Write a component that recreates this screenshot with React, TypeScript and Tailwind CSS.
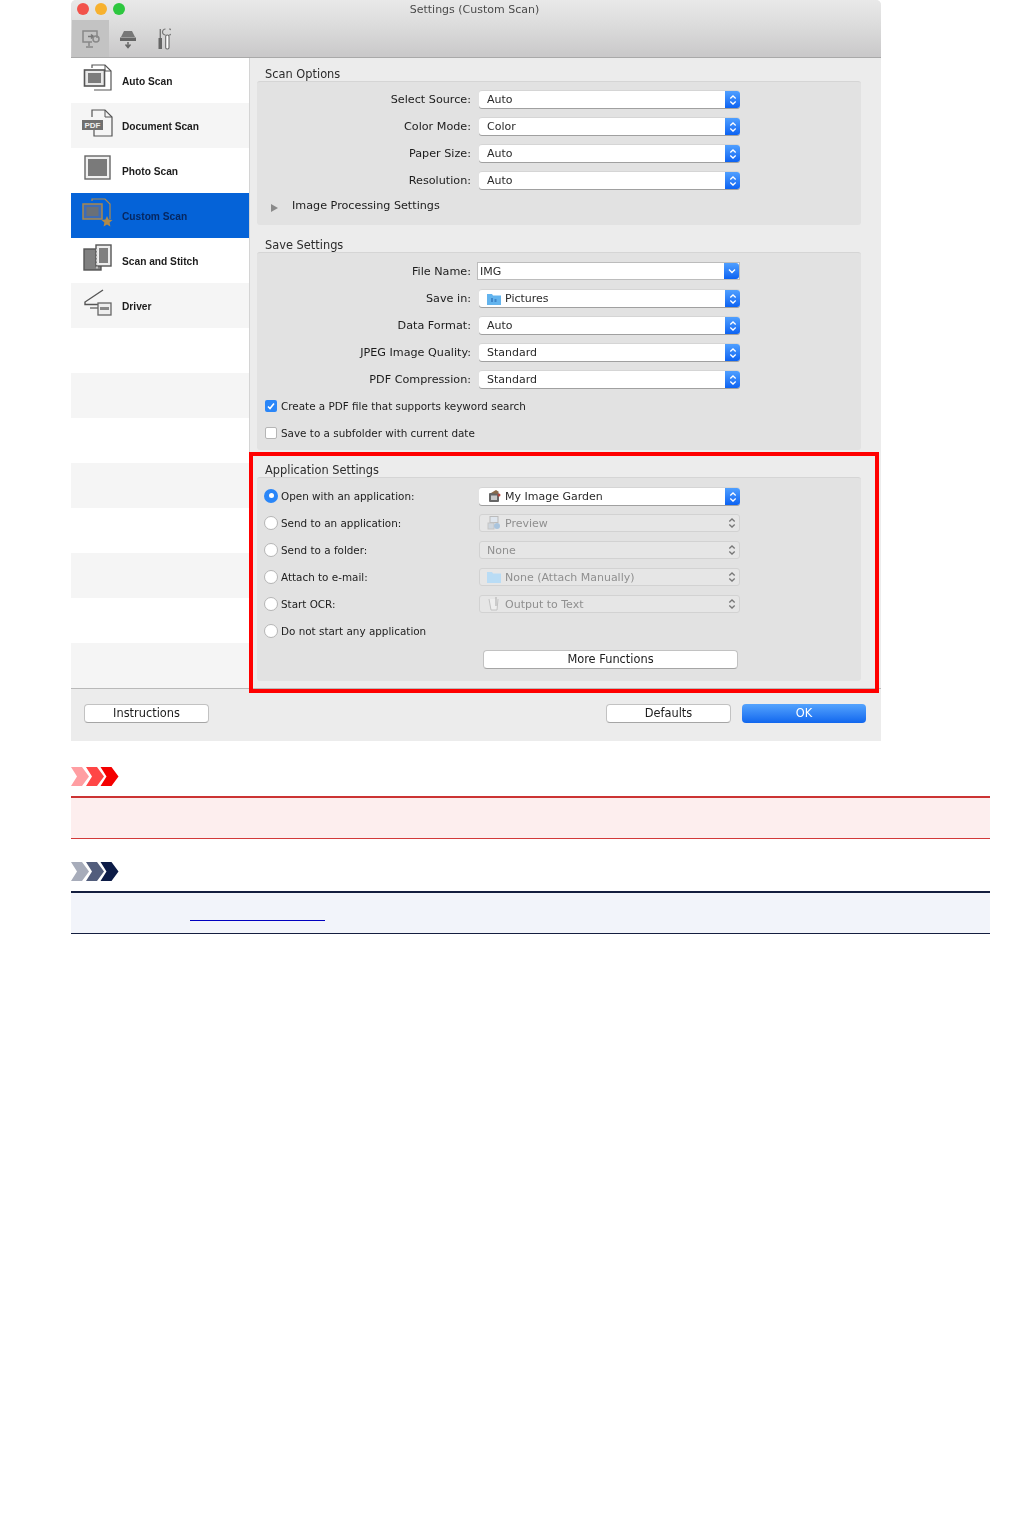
import type { ReactNode } from 'react';

const sans = 'font-["DejaVu_Sans",sans-serif]';

type IconProps = { active?: boolean };

function AutoScanIcon({ active }: IconProps) {
  const c = active ? '#a8884f' : '#555';
  return (
    <svg width="30" height="28" viewBox="0 0 30 28">
      <path d="M9 4V1h13l6 6v19H11" fill="none" stroke={c} strokeWidth="1.2" />
      <path d="M22 1v6h6" fill="none" stroke={c} strokeWidth="1" />
      <rect x="1.5" y="6" width="20" height="16" fill={active ? '#5a6d8f' : '#e8e8e8'} stroke={c} strokeWidth="1.6" />
      <rect x="5" y="9" width="13" height="10" fill={active ? '#6b6f7a' : '#7c7c7c'} />
    </svg>
  );
}

function DocumentIcon() {
  return (
    <svg width="32" height="28" viewBox="0 0 32 28">
      <path d="M10 8V1h13l7 7v19H12v-6" fill="none" stroke="#555" strokeWidth="1.2" />
      <path d="M23 1v7h7" fill="none" stroke="#555" strokeWidth="1" />
      <rect x="0" y="11" width="21" height="10" fill="#707070" />
      <text x="10.5" y="19" textAnchor="middle" fontSize="8" fontWeight="700" fill="#eee" fontFamily="Liberation Sans, sans-serif">
        PDF
      </text>
    </svg>
  );
}

function PhotoIcon() {
  return (
    <svg width="28" height="26" viewBox="0 0 28 26">
      <rect x="1" y="1" width="25" height="23" fill="#f0f0f0" stroke="#666" strokeWidth="1.4" />
      <rect x="4" y="4" width="19" height="17" fill="#7a7a7a" />
    </svg>
  );
}

function CustomIcon() {
  return (
    <svg width="32" height="30" viewBox="0 0 32 30">
      <path d="M10 3V1h13l5 5v15" fill="none" stroke="#b08a4a" strokeWidth="1.2" />
      <rect x="1" y="6" width="19" height="15" fill="#3f6cb4" stroke="#a8884f" strokeWidth="1.5" />
      <rect x="4.5" y="9" width="12" height="9" fill="#6a7078" />
      <path d="M25 18l1.600 3.600 3.900.4-2.900 2.600.8 3.800-3.400-2-3.400 2 .8-3.800-2.900-2.600 3.900-.4z" fill="#b08a4a" />
    </svg>
  );
}

function StitchIcon() {
  return (
    <svg width="30" height="28" viewBox="0 0 30 28">
      <rect x="1" y="5" width="17" height="21" fill="#808080" stroke="#555" strokeWidth="1.4" />
      <rect x="13" y="1" width="15" height="21" fill="#eee" stroke="#555" strokeWidth="1.4" />
      <rect x="16" y="4" width="9" height="15" fill="#808080" />
      <path d="M14 5v20" stroke="#ddd" strokeWidth="1.4" strokeDasharray="2 1.5" />
    </svg>
  );
}

function DriverIcon() {
  return (
    <svg width="30" height="28" viewBox="0 0 30 28">
      <path d="M20 1L2 13v2.500h17" fill="none" stroke="#555" strokeWidth="1.4" />
      <path d="M7 19h8" stroke="#555" strokeWidth="1.2" />
      <rect x="15" y="14" width="13" height="12" fill="#eee" stroke="#666" strokeWidth="1.3" />
      <rect x="17" y="18" width="9" height="3" fill="#888" />
    </svg>
  );
}

const scanModes = [
  { label: 'Auto Scan', icon: <AutoScanIcon /> },
  { label: 'Document Scan', icon: <DocumentIcon /> },
  { label: 'Photo Scan', icon: <PhotoIcon /> },
  { label: 'Custom Scan', icon: <CustomIcon />, active: true },
  { label: 'Scan and Stitch', icon: <StitchIcon /> },
  { label: 'Driver', icon: <DriverIcon /> },
];

function Stepper({ disabled }: { disabled?: boolean }) {
  const stroke = disabled ? '#777' : '#fff';
  return (
    <span
      className={`flex h-full w-[15px] shrink-0 items-center justify-center rounded-r-[3px] ${
        disabled ? '' : 'bg-gradient-to-b from-[#4f9fff] to-[#0b62f2]'
      }`}
    >
      <svg width="8" height="12" viewBox="0 0 8 12" fill="none" stroke={stroke} strokeWidth="1.300">
        <path d="M1.300 4.500L4 2l2.700 2.500" />
        <path d="M1.300 7.500L4 10l2.700-2.500" />
      </svg>
    </span>
  );
}

function Folder({ light }: { light?: boolean }) {
  return (
    <svg width="14" height="12" viewBox="0 0 14 12" className="shrink-0">
      <path d="M0 1h5l1 1.500h8V12H0z" fill={light ? '#b9dcf5' : '#63b4ee'} />
      {!light && <path d="M4 5h2v4H4zM7.500 6h2v3h-2z" fill="#3f86c9" />}
    </svg>
  );
}

function GardenIcon() {
  return (
    <svg width="14" height="13" viewBox="0 0 14 13" className="shrink-0">
      <rect x="2" y="3" width="10" height="9" rx="1" fill="#666" />
      <rect x="4" y="5.500" width="6" height="4.500" fill="#c9c9c9" />
      <path d="M4 3l5-3 3 2-2 2z" fill="#8a6a4a" />
      <circle cx="12" cy="5" r="1.500" fill="#b5473c" />
    </svg>
  );
}

function PreviewIcon() {
  return (
    <svg width="14" height="14" viewBox="0 0 14 14" className="shrink-0">
      <rect x="3" y="0.500" width="8" height="6" fill="#dfe6ee" stroke="#bbb" />
      <rect x="1" y="7" width="6" height="6" fill="#cfd6dd" stroke="#c5c5c5" />
      <circle cx="10" cy="10" r="3" fill="#a9c4dd" />
    </svg>
  );
}

function TextAppIcon() {
  return (
    <svg width="14" height="14" viewBox="0 0 14 14" className="shrink-0">
      <path d="M2 2l2 11h6l1-11" fill="#eee" stroke="#c2c2c2" />
      <path d="M9 0v9" stroke="#b5b5b5" strokeWidth="1.200" />
    </svg>
  );
}

function SelectBox({
  value,
  icon,
  disabled,
}: {
  value: string;
  icon?: ReactNode;
  disabled?: boolean;
}) {
  return (
    <div
      className={`ml-2 flex h-[18px] w-[261px] items-center rounded-[3px] ${
        disabled
          ? 'border border-[#d2d2d2] bg-[#e6e6e6] text-[#8f8f8f]'
          : 'border-t border-t-[#d5d5d5] bg-white text-[#2a2a2a] shadow-[0_1px_0_#a0a0a0]'
      }`}
    >
      <div className={`flex min-w-0 flex-1 items-center gap-[4px] ${disabled ? 'pl-[7px]' : 'pl-[8px]'}`}>
        {icon}
        <span className={`whitespace-nowrap ${disabled ? 'pt-[2px]' : 'pt-px'}`}>{value}</span>
      </div>
      <Stepper disabled={disabled} />
    </div>
  );
}

function FormRow({ label, children }: { label: string; children: ReactNode }) {
  return (
    <div className="flex h-[18px] items-center">
      <span className="w-[214px] whitespace-nowrap pt-[2px] text-right text-[11.2px] text-[#1c1c1c]">{label}</span>
      {children}
    </div>
  );
}

function Radio({ label, checked, children }: { label: string; checked?: boolean; children?: ReactNode }) {
  return (
    <div className="flex h-[18px] items-center">
      <div className="flex w-[214px] items-center gap-[3px] pl-[7px]">
        <span
          className={`flex h-[14px] w-[14px] shrink-0 items-center justify-center rounded-full ${
            checked ? 'bg-[#2a86f8]' : 'border border-[#b5b5b5] bg-white'
          }`}
        >
          {checked && <span className="h-[5px] w-[5px] rounded-full bg-white" />}
        </span>
        <span className="whitespace-nowrap pt-px text-[10.4px] text-[#1c1c1c]">{label}</span>
      </div>
      {children}
    </div>
  );
}

function CheckRow({ label, checked }: { label: string; checked?: boolean }) {
  return (
    <div className="flex h-[18px] items-center gap-[4px] pl-[8px]">
      <span
        className={`flex h-[12px] w-[12px] shrink-0 items-center justify-center rounded-[2px] ${
          checked ? 'bg-[#2a86f8]' : 'border border-[#b5b5b5] bg-white'
        }`}
      >
        {checked && (
          <svg width="10" height="10" viewBox="0 0 10 10" fill="none" stroke="#fff" strokeWidth="1.600">
            <path d="M2 5.500l2 2 4-5" />
          </svg>
        )}
      </span>
      <span className="whitespace-nowrap pt-px text-[10.4px] text-[#1c1c1c]">{label}</span>
    </div>
  );
}

function SectionTitle({ children }: { children: ReactNode }) {
  return <div className="h-[14px] pl-[16px] text-[11.4px] leading-[14px] text-[#2c2c2c]">{children}</div>;
}

function Chevrons({ colors }: { colors: [string, string, string] }) {
  return (
    <svg width="48" height="19" viewBox="0 0 48 19" className="block">
      <path d="M0 0h11l7 9.500-7 9.500H0l6-9.500z" fill={colors[0]} />
      <path d="M15 0h11l7 9.500-7 9.500H15l6-9.500z" fill={colors[1]} />
      <path d="M29.500 0h11l7 9.500-7 9.500h-11l6-9.500z" fill={colors[2]} />
    </svg>
  );
}

function MacButton({ label, primary, className }: { label: string; primary?: boolean; className: string }) {
  return (
    <div
      className={`flex h-[19px] items-center justify-center rounded-[4px] pt-px text-[11.4px] ${className} ${
        primary
          ? 'bg-gradient-to-b from-[#54a3fd] to-[#0f66ee] text-white'
          : 'border border-[#c2c2c2] border-b-[#a5a5a5] bg-white text-[#1c1c1c]'
      }`}
    >
      {label}
    </div>
  );
}

function SettingsWindow() {
  return (
    <div className={`w-[810px] rounded-t-[5px] bg-[#ececec] text-[11px] [filter:blur(0.5px)] ${sans}`}>
      {/* title bar */}
      <div className="flex h-[58px] flex-col rounded-t-[5px] border-b border-[#a9a9a9] bg-gradient-to-b from-[#e9e9e9] via-[#dadada] to-[#c9c8c9]">
        <div className="relative flex h-[20px] items-center justify-center pt-px text-[#4a4a4a]">
          <div className="absolute left-[6px] top-[3px] flex gap-[6px]">
            <span className="h-[12px] w-[12px] rounded-full bg-[#f2524a]" />
            <span className="h-[12px] w-[12px] rounded-full bg-[#f7b12e]" />
            <span className="h-[12px] w-[12px] rounded-full bg-[#2dc73f]" />
          </div>
          <span className="-ml-[3px]">Settings (Custom Scan)</span>
        </div>
        <div className="flex h-[37px] items-stretch pl-px">
          <div className="flex w-[37px] items-center justify-center bg-[#c3c3c3]">
            <svg width="20" height="20" viewBox="0 0 20 20" fill="none" stroke="#888" strokeWidth="1.500">
              <path d="M16 9V2H2v11h9" />
              <path d="M8 13v4M5 18h7" />
              <path d="M7 7.500h5M10 5.500l2.500 2-2.500 2" stroke="#777" />
              <circle cx="15" cy="10" r="3" />
            </svg>
          </div>
          <div className="flex w-[37px] items-center justify-center">
            <svg width="18" height="20" viewBox="0 0 18 20">
              <path d="M5 2h8l3 6H2z" fill="#777" />
              <rect x="1" y="8.500" width="16" height="3.500" fill="#666" />
              <path d="M9 13v5M6.500 15.500L9 18.500l2.500-3" fill="none" stroke="#666" strokeWidth="1.500" />
            </svg>
          </div>
          <div className="flex w-[35px] items-center justify-center">
            <svg width="14" height="22" viewBox="0 0 14 22">
              <rect x="1.500" y="10" width="3.500" height="11" fill="#666" />
              <path d="M3.300 1v9" stroke="#777" strokeWidth="1.400" />
              <path d="M8.500 7a2.300 2.300 0 0 1 0-6M12 1a2.300 2.300 0 0 1 0 6" fill="none" stroke="#777" strokeWidth="1.200" />
              <rect x="8.700" y="7" width="3.300" height="14" rx="1.500" fill="#fff" stroke="#666" strokeWidth="1.100" />
            </svg>
          </div>
        </div>
      </div>

      {/* body */}
      <div className="flex h-[630px]">
        <aside className="w-[178px] shrink-0 bg-white">
          {Array.from({ length: 14 }).map((_, i) => {
            const mode = scanModes[i];
            const rowBg = mode?.active ? 'bg-[#0563d8]' : i % 2 === 1 ? 'bg-[#f5f5f5]' : 'bg-white';
            return (
              <div key={i} className={`flex h-[45px] items-center ${rowBg}`}>
                {mode && (
                  <>
                    <div className="-mt-[5px] flex w-[51px] shrink-0 justify-center pl-[2px]">{mode.icon}</div>
                    <span
                      className={`mt-[3px] whitespace-nowrap font-["Liberation_Sans",sans-serif] text-[10.2px] font-bold ${
                        mode.active ? 'text-[#06265f]' : 'text-[#1c1c1c]'
                      }`}
                    >
                      {mode.label}
                    </span>
                  </>
                )}
              </div>
            );
          })}
        </aside>

        <main className="relative z-10 w-[632px] shrink-0 shadow-[inset_1px_0_0_#d4d4d4]">
          <div className="pt-[9px]">
            <SectionTitle>Scan Options</SectionTitle>
            <div className="ml-[8px] flex h-[144px] w-[604px] flex-col gap-[9px] rounded-[3px] border-t border-[#d5d5d5] bg-[#e2e2e2] pt-[8px]">
              <FormRow label="Select Source:">
                <SelectBox value="Auto" />
              </FormRow>
              <FormRow label="Color Mode:">
                <SelectBox value="Color" />
              </FormRow>
              <FormRow label="Paper Size:">
                <SelectBox value="Auto" />
              </FormRow>
              <FormRow label="Resolution:">
                <SelectBox value="Auto" />
              </FormRow>
              <div className="flex h-[14px] items-center pt-[2px] text-[#1c1c1c]">
                <svg width="7" height="8" viewBox="0 0 7 8" className="ml-[14px] mt-[4px]">
                  <path d="M0 0l7 4-7 4z" fill="#8a8a8a" />
                </svg>
                <span className="ml-[14px] whitespace-nowrap text-[11.2px]">Image Processing Settings</span>
              </div>
            </div>
          </div>

          <div className="pt-[13px]">
            <SectionTitle>Save Settings</SectionTitle>
            <div className="ml-[8px] flex h-[198px] w-[604px] flex-col gap-[9px] rounded-[3px] border-t border-[#d5d5d5] bg-[#e2e2e2] pt-[9px]">
              <div className="flex h-[18px] items-center">
                <span className="w-[214px] whitespace-nowrap pt-[2px] text-right text-[11.2px] text-[#1c1c1c]">File Name:</span>
                <div className="ml-[6px] flex h-[18px] w-[263px] items-center border border-[#bcbcbc] bg-white text-[#2a2a2a]">
                  <span className="flex-1 pl-[2px] pt-[2px]">IMG</span>
                  <span className="flex h-full w-[15px] items-center justify-center rounded-r-[3px] bg-gradient-to-b from-[#4f9fff] to-[#0b62f2]">
                    <svg width="8" height="6" viewBox="0 0 8 6" fill="none" stroke="#fff" strokeWidth="1.400">
                      <path d="M1 1.500L4 4.500l3-3" />
                    </svg>
                  </span>
                </div>
              </div>
              <FormRow label="Save in:">
                <SelectBox value="Pictures" icon={<Folder />} />
              </FormRow>
              <FormRow label="Data Format:">
                <SelectBox value="Auto" />
              </FormRow>
              <FormRow label="JPEG Image Quality:">
                <SelectBox value="Standard" />
              </FormRow>
              <FormRow label="PDF Compression:">
                <SelectBox value="Standard" />
              </FormRow>
              <CheckRow label="Create a PDF file that supports keyword search" checked />
              <CheckRow label="Save to a subfolder with current date" />
            </div>
          </div>

          {/* highlighted section, runs a little over the footer */}
          <div className="mt-[2px] h-[241px] w-[630px] border-4 border-[#ff0000] pt-[7px]">
            <div className="h-[14px] pl-[12px] text-[11.4px] leading-[14px] text-[#2c2c2c]">Application Settings</div>
            <div className="ml-[4px] flex h-[204px] w-[604px] flex-col gap-[9px] rounded-[3px] border-t border-[#d5d5d5] bg-[#e2e2e2] pt-[9px]">
              <Radio label="Open with an application:" checked>
                <SelectBox value="My Image Garden" icon={<GardenIcon />} />
              </Radio>
              <Radio label="Send to an application:">
                <SelectBox value="Preview" icon={<PreviewIcon />} disabled />
              </Radio>
              <Radio label="Send to a folder:">
                <SelectBox value="None" disabled />
              </Radio>
              <Radio label="Attach to e-mail:">
                <SelectBox value="None (Attach Manually)" icon={<Folder light />} disabled />
              </Radio>
              <Radio label="Start OCR:">
                <SelectBox value="Output to Text" icon={<TextAppIcon />} disabled />
              </Radio>
              <Radio label="Do not start any application" />
              <div className="mt-px pl-[226px]">
                <MacButton label="More Functions" className="w-[255px]" />
              </div>
            </div>
          </div>
        </main>
      </div>

      {/* footer */}
      <div className="flex h-[53px] items-start border-t border-[#b9b9b9] pl-[13px] pr-[15px] pt-[15px]">
        <MacButton label="Instructions" className="w-[125px]" />
        <MacButton label="Defaults" className="ml-auto w-[125px]" />
        <MacButton label="OK" primary className="ml-[11px] w-[124px]" />
      </div>
    </div>
  );
}

export default function App() {
  return (
    <div className="min-h-screen bg-white pl-[71px]">
      <SettingsWindow />

      {/* important */}
      <div className="mt-[26px] w-[919px]">
        <Chevrons colors={['#ff9ea2', '#ff4646', '#f40000']} />
        <div className="mt-[10px] h-[43px] border-b border-t-2 border-b-[#d23a3a] border-t-[#cc3333] bg-[#fdeeee]" />
      </div>

      {/* note */}
      <div className="mt-[23px] w-[919px]">
        <Chevrons colors={['#a7acba', '#525d7c', '#0d1c47']} />
        <div className="mt-[10px] h-[43px] border-b border-t-2 border-b-[#141e3f] border-t-[#141e3f] bg-[#f2f4fa] pl-[119px] pt-[27px]">
          <div className="h-px w-[135px] bg-[#0000c0]" />
        </div>
      </div>
    </div>
  );
}
